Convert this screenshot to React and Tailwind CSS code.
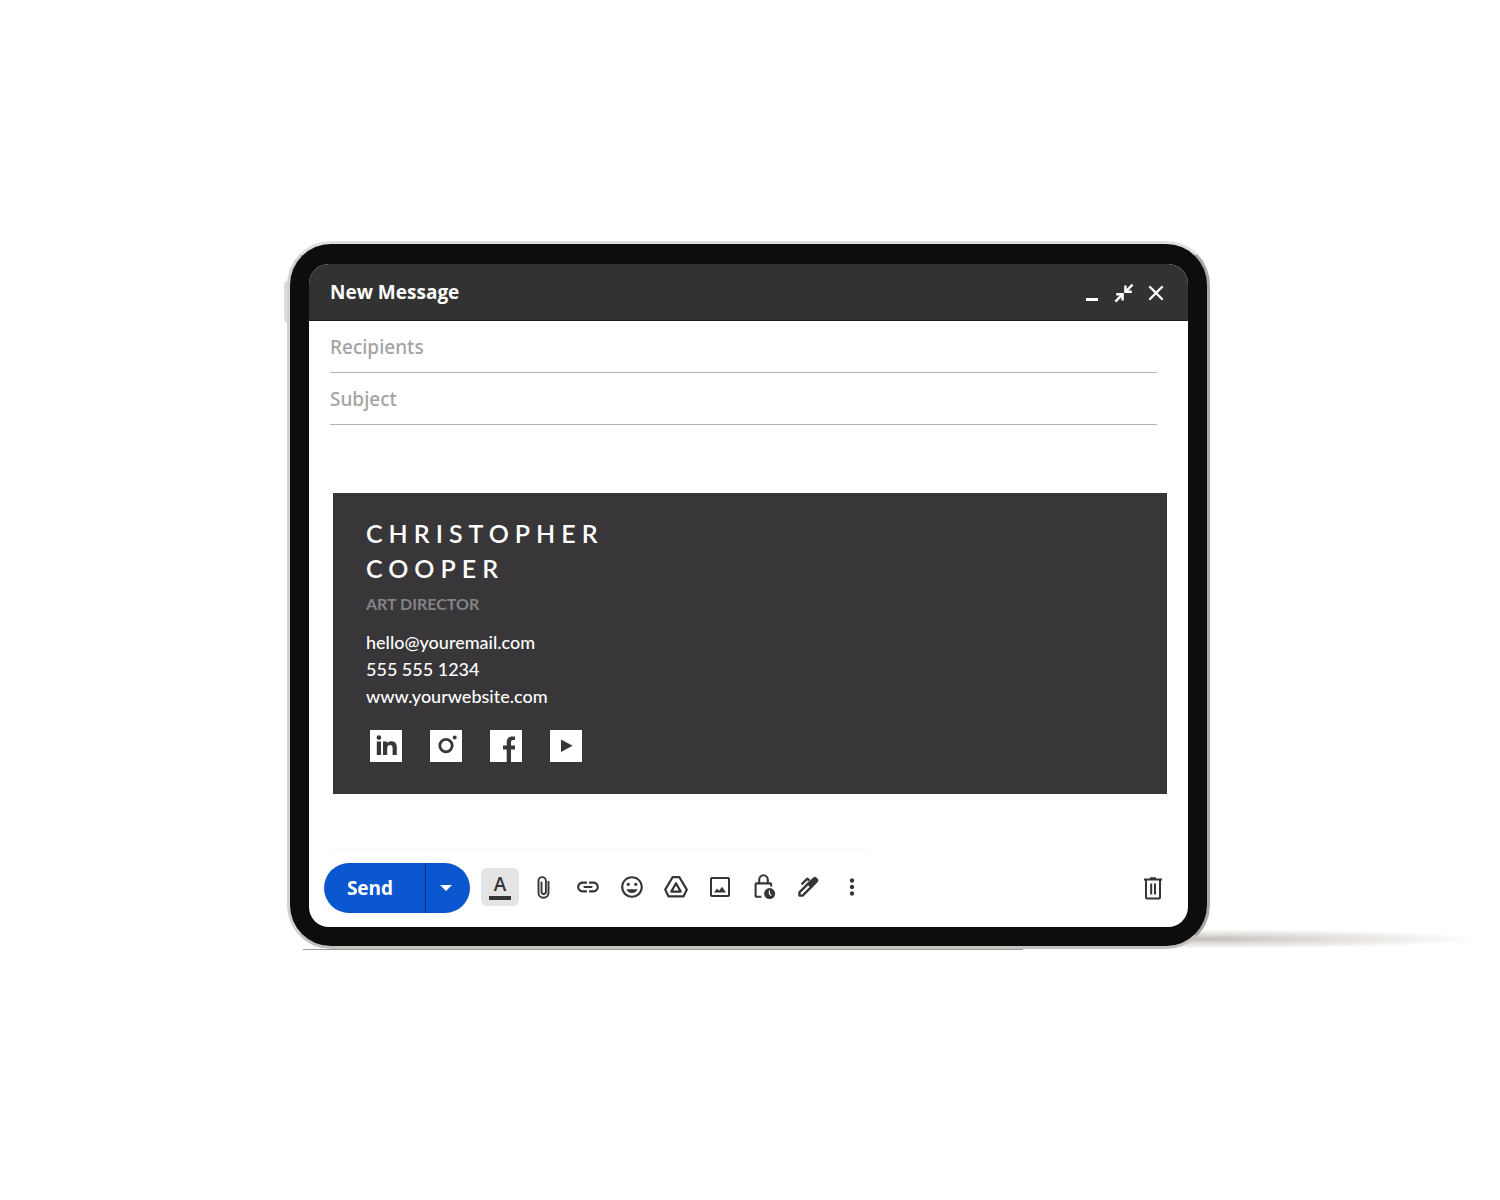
import React, { useState } from "react";
import { MdInsertLink, MdTagFaces, MdMoreVert } from "react-icons/md";

function ClipIcon() {
    return (
        <svg width="26" height="26" viewBox="0 0 26 26" fill="none" stroke="currentColor" strokeWidth="1.9">
            <path d="M17.8 6.600v11.800a5 5 0 0 1-10 0V6.400a3.700 3.700 0 0 1 7.400 0v11a2.200 2.200 0 0 1-4.400 0V7.400" transform="translate(-0.3 0.4)" />
        </svg>
    );
}

function DriveIcon() {
    return (
        <svg width="26" height="26" viewBox="0 0 26 26" fill="none" stroke="currentColor" strokeWidth="2.2" strokeLinejoin="round">
            <path d="M9.6 3.2h6.8l7.400 12.400-3.200 6.700H5.400l-3.200-6.700z" />
            <path d="M13 9.200l4.700 8.400H8.300z" />
        </svg>
    );
}

function ImageIcon() {
    return (
        <svg width="26" height="26" viewBox="0 0 26 26" fill="none">
            <rect x="4" y="4" width="18" height="18" rx="1" stroke="currentColor" strokeWidth="2" />
            <path d="M7 18.6l3-4 2 2.2 3-4 4 5.8z" fill="currentColor" />
        </svg>
    );
}

function LockClockIcon() {
    return (
        <svg width="26" height="26" viewBox="0 0 26 26" fill="none">
            <path d="M8.2 9.400V6a4.200 4.600 0 0 1 8.600 0v3.400" stroke="currentColor" strokeWidth="2.100" />
            <path d="M10.4 22.800H5.600a1 1 0 0 1-1-1V10.400a1 1 0 0 1 1-1h13.600a1 1 0 0 1 1 1v2" stroke="currentColor" strokeWidth="2.100" />
            <circle cx="18.600" cy="19.600" r="5.500" fill="currentColor" />
            <path d="M18.400 16.600v3.200l2 1.800" stroke="#fff" strokeWidth="1.200" />
        </svg>
    );
}

function PenIcon() {
    return (
        <svg width="26" height="26" viewBox="0 0 26 26" fill="none" strokeLinejoin="round" stroke="currentColor">
            <path d="M4.400 18.400l9-9 3.200 3.200-9 9H4.400z" strokeWidth="2.300" />
            <path d="M12.600 9.600l6.200-5.600a1.400 1.400 0 0 1 2 0l1.400 1.400a1.400 1.400 0 0 1 0 2l-5.800 6z" fill="currentColor" strokeWidth="1.500" />
            <path d="M6.600 10.400l5.800-5.800 2 2" strokeWidth="2.200" />
        </svg>
    );
}

function TrashIcon() {
    return (
        <svg width="26" height="26" viewBox="0 0 26 26" fill="none" stroke="currentColor" strokeWidth="2">
            <path d="M4 4.600h18M10 3.200h6M6 5v17.400a1 1 0 0 0 1 1h12a1 1 0 0 0 1-1V5M11.200 8.600v11M15 8.600v11" />
        </svg>
    );
}

function SocialLink({ label, children }) {
    return (
        <a href="#" aria-label={label} className="block size-8 bg-white text-[#383639]">
            <svg width="32" height="32" viewBox="0 0 32 32" fill="currentColor">
                {children}
            </svg>
        </a>
    );
}

const tools = [
    { label: "Attach file", icon: <ClipIcon /> },
    { label: "Insert link", icon: <MdInsertLink size={26} /> },
    { label: "Insert emoji", icon: <MdTagFaces size={26} /> },
    { label: "Insert from Drive", icon: <DriveIcon /> },
    { label: "Insert image", icon: <ImageIcon /> },
    { label: "Confidential mode", icon: <LockClockIcon /> },
    { label: "Insert signature", icon: <PenIcon /> },
    { label: "More options", icon: <MdMoreVert size={26} /> },
];

function Signature() {
    return (
        <section className="mt-[68px] mr-[21px] ml-6 bg-[#383639] px-[33px] pt-[23px] pb-8 font-['Lato',sans-serif] text-white">
            <h2 className="w-64 text-[25px] leading-[35px] font-semibold tracking-[6px]">
                CHRISTOPHER COOPER
            </h2>
            <p className="text-base leading-9 font-bold text-[#848285]">ART DIRECTOR</p>
            <address className="mt-[7px] flex flex-col items-start text-lg leading-[27px] font-medium not-italic">
                <a href="mailto:hello@youremail.com">hello@youremail.com</a>
                <a href="tel:5555551234">555 555 1234</a>
                <a href="#">www.yourwebsite.com</a>
            </address>
            <div className="mt-5 ml-1 flex gap-7">
                <SocialLink label="LinkedIn">
                    <circle cx="8.9" cy="7.6" r="2.3" />
                    <path d="M6.8 11.6H11V25H6.8zM13 11.6h4v1.9c.8-1.4 2.3-2.2 4.2-2.2 4 0 5.600 2.400 5.600 6.200V25h-4.200v-6.800c0-2-.6-3.300-2.500-3.300-2 0-2.900 1.400-2.900 3.400V25H13z" />
                </SocialLink>
                <SocialLink label="Instagram">
                    <circle cx="16" cy="15.6" r="6.2" fill="none" stroke="currentColor" strokeWidth="2.8" />
                    <circle cx="24.7" cy="7.6" r="2" />
                </SocialLink>
                <SocialLink label="Facebook">
                    <path d="M16.700 32V19.400H13v-3.800h3.700v-3c0-4 2.200-6.200 5.800-6.200H25v3.700h-1.800c-1.500 0-2.200.8-2.200 2.300v3.200h4v3.800h-4V32z" />
                </SocialLink>
                <SocialLink label="YouTube">
                    <path d="M11 9.500L22.600 15.700 11 22z" />
                </SocialLink>
            </div>
        </section>
    );
}

export default function App() {
    const [recipients, setRecipients] = useState("");
    const [subject, setSubject] = useState("");

    const fieldClass =
        "block h-[52px] w-full border-b border-[#b3b3b3] bg-transparent font-['Noto_Sans',sans-serif] text-[19px] font-medium text-[#333] outline-none placeholder:text-[#a3a3a3]";

    return (
        <main className="flex min-h-screen items-center justify-center overflow-hidden bg-white pr-[3px] pb-[10px] font-['Open_Sans',sans-serif]">
            <div className="relative w-full max-w-[923px]">
                {/* shadow on the table and the side button */}
                <div className="absolute -right-[270px] bottom-0 h-5 w-[560px] bg-[radial-gradient(closest-side,#c4bdb8,#e2deda_45%,#ffffff00)]" />
                <div className="absolute top-10 -left-[3px] h-[42px] w-1 rounded-l-sm bg-[#dddcd6]" />
                <div className="absolute -bottom-px left-4 h-px w-[720px] bg-[#a09b97]" />

                <div className="relative rounded-[44px] border-3 border-t-[#dfe0db] border-r-[#aaa6a4] border-b-[#c4c1be] border-l-[#d2d1cd] bg-[#0d0d0d] px-[19px] pt-5 pb-[19px]">
                    <form className="overflow-hidden rounded-[20px] bg-white" onSubmit={(e) => e.preventDefault()}>
                        <header className="flex h-[57px] items-center justify-between border-b border-[#1c1c1c] bg-[#323232] pt-px pr-5 pl-[21px] text-white">
                            <h1 className="text-[19px] font-bold">New Message</h1>
                            <div className="flex gap-2">
                                <button type="button" aria-label="Minimize" className="flex size-6 items-center justify-center">
                                    <svg width="24" height="24" viewBox="0 0 24 24" stroke="currentColor" strokeWidth="3">
                                        <path d="M6 18.500h12" />
                                    </svg>
                                </button>
                                <button type="button" aria-label="Exit full screen" className="flex size-6 items-center justify-center">
                                    <svg width="24" height="24" viewBox="0 0 24 24" fill="none" stroke="currentColor" strokeWidth="2.400">
                                        <path d="M13.400 4.600v6.200h6.400M13.400 10.800l7.200-7.200M4.200 13.200h6.400v6.400M10.600 13.200l-7.200 7.400" />
                                    </svg>
                                </button>
                                <button type="button" aria-label="Close" className="flex size-6 items-center justify-center">
                                    <svg width="24" height="24" viewBox="0 0 24 24" stroke="currentColor" strokeWidth="2.400" strokeLinecap="round">
                                        <path d="M6 6l12 12M18 6L6 18" />
                                    </svg>
                                </button>
                            </div>
                        </header>

                        <div className="mr-[31px] ml-[21px]">
                            <input
                                type="text"
                                aria-label="Recipients"
                                placeholder="Recipients"
                                className={fieldClass}
                                value={recipients}
                                onChange={(e) => setRecipients(e.target.value)}
                            />
                            <input
                                type="text"
                                aria-label="Subject"
                                placeholder="Subject"
                                className={fieldClass}
                                value={subject}
                                onChange={(e) => setSubject(e.target.value)}
                            />
                        </div>

                        <Signature />

                        <div className="mt-[55px] ml-[21px] h-px w-[540px] bg-[#f8f8f8]" />
                        <footer className="flex items-center pt-[13px] pr-[22px] pb-[14px] pl-[15px] text-[#333536]">
                            <div className="flex h-[50px] overflow-hidden rounded-full bg-[#0b57d0] text-white">
                                <button type="submit" className="w-[102px] border-r border-[#0a2f6e] pr-[9px] text-[19px] font-bold">
                                    Send
                                </button>
                                <button type="button" aria-label="Send options" className="flex w-11 items-center justify-center pr-1">
                                    <svg width="12" height="6" viewBox="0 0 12 6" fill="currentColor">
                                        <path d="M0 0h12L6 6z" />
                                    </svg>
                                </button>
                            </div>
                            <div className="mb-[3px] ml-[11px] flex flex-1 gap-[6px]">
                                <button type="button" aria-label="Formatting options" className="flex size-[38px] flex-col items-center justify-center gap-[2px] rounded-md bg-[#e4e4e4]">
                                    <span className="text-[19px] leading-5 font-semibold">A</span>
                                    <span className="h-1 w-[22px] bg-current" />
                                </button>
                                {tools.map((tool) => (
                                    <button key={tool.label} type="button" aria-label={tool.label} className="flex size-[38px] items-center justify-center">
                                        {tool.icon}
                                    </button>
                                ))}
                            </div>
                            <button type="button" aria-label="Discard draft">
                                <TrashIcon />
                            </button>
                        </footer>
                    </form>
                </div>
            </div>
        </main>
    );
}
